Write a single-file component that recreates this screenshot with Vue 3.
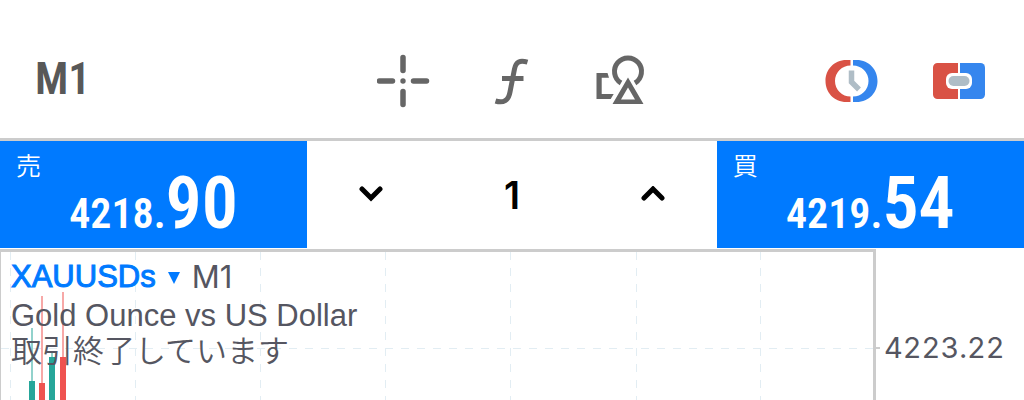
<script setup>
import { ref } from 'vue'

const symbol = {
  name: 'XAUUSDs',
  timeframe: 'M1',
  description: 'Gold Ounce vs US Dollar',
  status: '取引終了しています'
}

const quotes = {
  sell: { label: '売', whole: '4218.', pips: '90' },
  buy: { label: '買', whole: '4219.', pips: '54' }
}

const volume = ref('1')

function step(delta) {
  const next = (Number(volume.value) || 0) + delta
  volume.value = String(Math.max(1, next))
}

const GRID_X = [9, 134, 259, 384, 509, 635, 759]
const GRID_Y = [96]

const CANDLES = [
  { x: 31, high: 76, open: 129, up: true },
  { x: 41, high: 44, open: 131, up: false },
  { x: 51, high: 99, open: 105, up: true },
  { x: 62, high: 40, open: 105, up: false }
]
</script>

<template>
  <div class="terminal">
    <header class="toolbar">
      <button type="button" class="timeframe">{{ symbol.timeframe }}</button>

      <div class="tools">
        <button type="button" class="tool" aria-label="Crosshair">
          <svg width="54" height="54" viewBox="0 0 54 54" fill="none" stroke="#666" stroke-width="5.500" stroke-linecap="round">
            <path d="M26 3.500v13M26 37.500v13M2.500 27h13M36.500 27h13" />
            <circle cx="26" cy="27" r="2.700" fill="#666" stroke="none" />
          </svg>
        </button>
        <button type="button" class="tool" aria-label="Indicators">
          <svg width="54" height="54" viewBox="0 0 54 54" fill="none" stroke="#666" stroke-width="5">
            <path d="M42.500 8.200C35 6 31 7.500 29.500 15L25 38C23.500 46.500 18.500 49.500 10.500 47" />
            <path d="M17 24.500h21.500" />
          </svg>
        </button>
        <button type="button" class="tool" aria-label="Objects">
          <svg width="54" height="54" viewBox="0 0 54 54" fill="none">
            <path d="M3.500 19H14.500l1.500 4.800H8.700V40h12l-3 5H3.500z" fill="#666" />
            <path d="M28 29A13.500 13.500 0 1 1 42 29" stroke="#666" stroke-width="5" />
            <path fill-rule="evenodd" d="M35 23.500L50.500 50H19.500zM35 33.500L28 45.500H42z" fill="#666" />
          </svg>
        </button>
      </div>

      <div class="modes">
        <button type="button" class="tool" aria-label="Trading hours">
          <svg width="54" height="54" viewBox="0 0 54 54">
            <path d="M26.500 6v5.500a15.500 15.500 0 0 0 0 31V48h-4C9.500 48 1.500 38 1.500 27S9.500 6 22.500 6z" fill="#d95245" />
            <path d="M29 6v5.500a15.500 15.500 0 0 1 0 31V48h3.500c13 0 21-10 21-21S45.500 6 32.500 6z" fill="#3586ee" />
            <path d="M27.500 16.500v11.500l7.500 7.500" fill="none" stroke="#afbdc6" stroke-width="5.500" />
          </svg>
        </button>
        <button type="button" class="tool" aria-label="One click trading">
          <svg width="54" height="54" viewBox="0 0 54 54">
            <path d="M26 9H5.500a4.500 4.500 0 0 0-4.500 4.500v27a4.500 4.500 0 0 0 4.500 4.500H26z" fill="#d95245" />
            <path d="M28 9h20.500a4.500 4.500 0 0 1 4.500 4.500v27a4.500 4.500 0 0 1-4.500 4.500H28z" fill="#3586ee" />
            <rect x="14" y="19" width="26" height="16" rx="6" fill="#fff" />
            <rect x="16.500" y="22" width="21" height="10" rx="5" fill="#afbdc6" />
          </svg>
        </button>
      </div>
    </header>

    <section class="trade">
      <button type="button" class="quote">
        <span class="side">{{ quotes.sell.label }}</span>
        <span class="price">{{ quotes.sell.whole }}<b>{{ quotes.sell.pips }}</b></span>
      </button>

      <div class="volume">
        <button type="button" class="step" aria-label="Decrease volume" @click="step(-1)">
          <svg width="24" height="18" viewBox="0 0 24 18"><path d="M3 3l9 9 9-9" /></svg>
        </button>
        <input v-model="volume" type="text" inputmode="decimal" aria-label="Volume" />
        <button type="button" class="step" aria-label="Increase volume" @click="step(1)">
          <svg width="24" height="18" viewBox="0 0 24 18"><path d="M3 12l9-9 9 9" /></svg>
        </button>
      </div>

      <button type="button" class="quote">
        <span class="side">{{ quotes.buy.label }}</span>
        <span class="price">{{ quotes.buy.whole }}<b>{{ quotes.buy.pips }}</b></span>
      </button>
    </section>

    <main class="chart">
      <div class="plot">
        <svg class="canvas" width="100%" height="100%">
          <g class="grid">
            <line v-for="x in GRID_X" :key="'x' + x" :x1="x" :x2="x" y1="0" y2="100%" />
            <line v-for="y in GRID_Y" :key="'y' + y" x1="0" x2="100%" :y1="y" :y2="y" />
          </g>
          <g v-for="c in CANDLES" :key="c.x" :class="c.up ? 'up' : 'down'">
            <rect :x="c.x - 0.5" :y="c.high" width="1" :height="c.open - c.high" />
            <rect :x="c.x - 3" :y="c.open" width="6" height="100%" />
          </g>
        </svg>

        <div class="legend">
          <div class="line">
            <a href="#" class="symbol">{{ symbol.name }}</a>
            <svg class="caret" width="12" height="14" viewBox="0 0 12 14"><path d="M0 2h12L6 14z" /></svg>
            <span class="period">{{ symbol.timeframe }}</span>
          </div>
          <div class="line">{{ symbol.description }}</div>
          <div class="status">{{ symbol.status }}</div>
        </div>
      </div>

      <div class="scale">
        <span class="tick">4223.22</span>
      </div>
    </main>
  </div>
</template>

<style>
body {
  margin: 0;
  background: #fff;
}
</style>

<style scoped>
.terminal {
  display: grid;
  grid-template-rows: auto auto 1fr;
  grid-template-columns: minmax(0, 1fr);
  min-height: 100vh;
  font-family: 'Liberation Sans', 'Noto Sans CJK JP', sans-serif;
  color: #555661;
}

button {
  padding: 0;
  border: 0;
  background: none;
  color: inherit;
  font: inherit;
  cursor: pointer;
}

svg {
  display: block;
}

.toolbar {
  display: grid;
  grid-template-columns: 1fr auto 1fr;
  align-items: center;
  padding: 24px 11px 0;
  border-bottom: 3px solid #ccc;
}

.timeframe {
  justify-self: start;
  padding: 0 0 4px 24px;
  color: #585858;
  font-family: 'Roboto Condensed', 'Liberation Sans Narrow', sans-serif;
  font-size: 44px;
  font-weight: 600;
}

.tools,
.modes {
  display: flex;
}

.modes {
  justify-self: end;
}

.tool {
  display: flex;
  align-items: center;
  justify-content: center;
  width: 108px;
  height: 114px;
}

.trade {
  display: grid;
  grid-template-columns: 3fr 4fr 3fr;
}

.quote {
  display: flex;
  flex-direction: column;
  align-items: flex-start;
  height: 107px;
  padding: 8px 16px 0;
  background: #007aff;
  color: #fff;
}

.side {
  font-family: 'Noto Sans CJK JP', sans-serif;
  font-size: 25px;
  font-weight: 350;
  line-height: 30px;
}

.price {
  align-self: center;
  font-family: 'Roboto Condensed', 'Liberation Sans Narrow', sans-serif;
  font-size: 42px;
  font-weight: 600;
  line-height: 50px;
}

.price b {
  font-size: 72px;
  font-weight: 600;
}

.volume {
  display: flex;
  align-items: center;
}

.step {
  display: flex;
  flex: 0 0 128px;
  align-items: center;
  justify-content: center;
  height: 100%;
}

.step path {
  fill: none;
  stroke: #000;
  stroke-width: 5;
  stroke-linecap: round;
}

.volume input {
  flex: 1;
  width: 0;
  min-width: 0;
  padding: 0;
  border: 0;
  outline: 0;
  background: none;
  color: #000;
  font-family: Inter, sans-serif;
  font-size: 38px;
  font-weight: 600;
  text-align: center;
}

.chart {
  display: grid;
  grid-template-columns: minmax(0, 1fr) 148px;
  margin-top: 1px;
}

.plot {
  position: relative;
  border: 3px solid #ccc;
  border-width: 3px 3px 0 1px;
}

.canvas {
  position: absolute;
  inset: 0;
}

.grid line {
  stroke: #e2edf3;
  stroke-width: 1;
  stroke-dasharray: 8 8;
  shape-rendering: crispEdges;
}

.up {
  fill: #26a69a;
}

.down {
  fill: #ef5350;
}

.legend {
  position: relative;
  padding: 5px 10px 0;
  font-size: 31px;
}

.line {
  display: flex;
  align-items: center;
  height: 39px;
  line-height: 39px;
}

.symbol {
  color: #007aff;
  text-decoration: none;
  -webkit-text-stroke: 1px #007aff;
}

.caret {
  margin: 0 12px;
  fill: #007aff;
}

.period {
  font-family: Inter, sans-serif;
}

.status {
  font-family: 'Noto Sans CJK JP', sans-serif;
  font-weight: 350;
  line-height: 28px;
}

.scale {
  padding-top: 80px;
}

.tick {
  display: flex;
  align-items: center;
  gap: 4px;
  font-family: Inter, sans-serif;
  font-size: 29px;
  line-height: 38px;
  font-variant-numeric: tabular-nums;
}

.tick::before {
  content: '';
  width: 4px;
  height: 2px;
  background: #ccc;
}
</style>
